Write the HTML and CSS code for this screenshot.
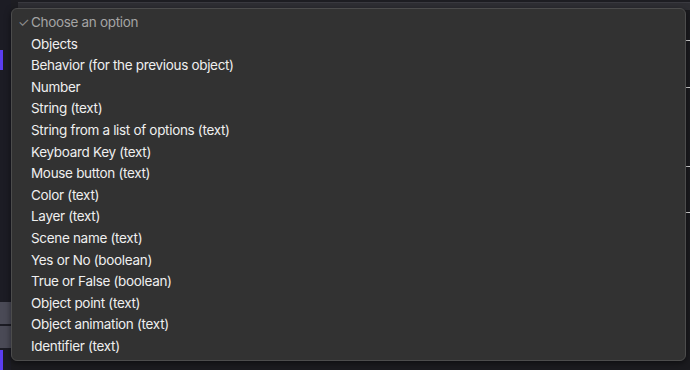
FILE: index.html
```html
<!DOCTYPE html>
<html>
<head>
<meta charset="utf-8">
<link rel="stylesheet" href="styles.css">
</head>
<body>
<div class="app">
  <div class="side">
    <div class="side-btn accent"></div>
    <div class="side-fill"></div>
    <div class="side-btn gray"></div>
    <div class="side-btn gray"></div>
    <div class="side-btn accent"></div>
  </div>
  <div class="main">
    <div class="topbar"></div>
    <div class="content">
      <div class="rows"></div>
      <div class="rightlines">
        <div class="rl"></div><div class="rl"></div><div class="rl"></div><div class="rl"></div>
      </div>
    </div>
  </div>
</div>
<div class="menu">
  <div class="opt placeholder"><span class="check">✓</span>Choose an option</div>
  <div class="opt">Objects</div>
  <div class="opt">Behavior (for the previous object)</div>
  <div class="opt">Number</div>
  <div class="opt">String (text)</div>
  <div class="opt">String from a list of options (text)</div>
  <div class="opt">Keyboard Key (text)</div>
  <div class="opt">Mouse button (text)</div>
  <div class="opt">Color (text)</div>
  <div class="opt">Layer (text)</div>
  <div class="opt">Scene name (text)</div>
  <div class="opt">Yes or No (boolean)</div>
  <div class="opt">True or False (boolean)</div>
  <div class="opt">Object point (text)</div>
  <div class="opt">Object animation (text)</div>
  <div class="opt">Identifier (text)</div>
</div>
</body>
</html>
```
FILE: styles.css
```css
html, body {
  margin: 0;
  padding: 0;
  width: 690px;
  height: 370px;
  overflow: hidden;
  background: #1d1d22;
}
.app {
  display: flex;
  width: 690px;
  height: 370px;
}
.side {
  width: 11px;
  display: flex;
  flex-direction: column;
  background: #1c1c24;
  padding-top: 50px;
  gap: 2px;
}
.side-btn { height: 20px; }
.side-btn.accent { width: 3px; background: #5b3df0; }
.side-btn.gray { background: #4a4a56; height: 22px; }
.side-fill { flex: 1; }
.main {
  flex: 1;
  display: flex;
  flex-direction: column;
}
.topbar {
  height: 8px;
  margin-left: 7px;
  margin-top: 2px;
  background: #2e2e33;
  border-top: 1px solid #3a3a40;
  box-sizing: border-box;
}
.content {
  flex: 1;
  display: flex;
  background: #1b1b1f;
}
.rows { flex: 1; }
.rightlines {
  width: 4px;
  display: flex;
  flex-direction: column;
  padding-top: 30px;
}
.rl { height: 1px; background: #d8d8d8; }
.rl:nth-child(2) { margin-top: 46px; }
.rl:nth-child(3) { margin-top: 78px; }
.rl:nth-child(4) { margin-top: 45px; }
.menu {
  position: absolute;
  left: 11px;
  top: 8px;
  width: 675px;
  height: 353px;
  box-sizing: border-box;
  background: #323232;
  border: 1px solid #4c4c4c;
  border-radius: 6px;
  padding: 3px 0 4px 0;
  font-family: Inter, "Noto Sans", sans-serif;
  font-size: 13.5px;
  letter-spacing: -0.32px;
  color: #efefef;
  box-shadow: 0 2px 6px rgba(0,0,0,0.5);
}
.opt {
  height: 21.6px;
  line-height: 21.6px;
  padding-left: 19px;
  position: relative;
  white-space: nowrap;
}
.placeholder { color: #a4a4a4; }
.check {
  position: absolute;
  left: 6px;
  font-size: 13px;
  color: #8e8e8e;
}
```
